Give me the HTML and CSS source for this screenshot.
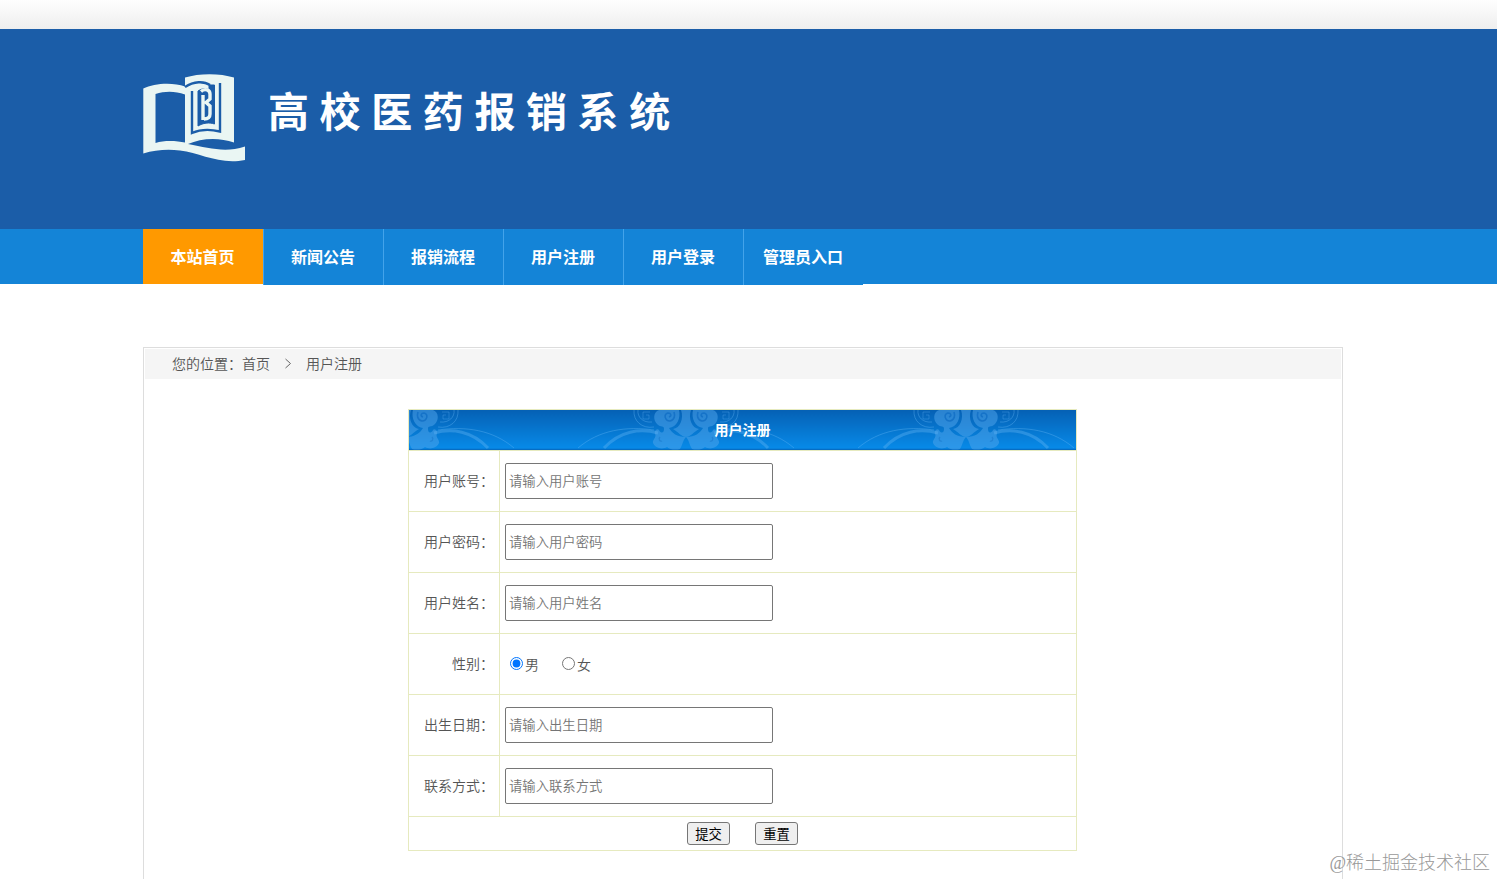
FILE: index.html
```
<!DOCTYPE html>
<html lang="zh-CN">
<head>
    <meta charset="UTF-8">
    <title>高校医药报销系统</title>
    <link rel="stylesheet" href="styles.css">
</head>
<body>

    <div class="topbar"></div>

    <div class="header">
        <div class="wrap header-inner">
            <svg class="logo" width="104" height="90" viewBox="0 0 104 90">
                <!-- book -->
                <path fill="#eaf6f3" fill-rule="evenodd" d="M.3 15.5 C11 10 30 9 42 13.5 V4.5 C56 0 77 0 91 4.5 V69.5 C76 64 58 65 45 71 C66 75 82 80 102 73.5 V87 C76 92 58 80 37 77.5 C24 76 12 77 .3 80.5 Z M12.5 21 C22 18 32 18 42 21.5 V69.5 C34 68 22 67 12.5 70 Z"/>
                <!-- emblem on the right page -->
                <g fill="none" stroke="#1b5da8">
                    <path stroke-width="2.4" d="M42 14 C51 8 61 8 67 12 M49 18 V60 C58 56 67 56 77 58.5 V10"/>
                    <path fill="#1b5da8" stroke-width="1" d="M55 18 C60 15 63 15 66 17 V12 H71.5 V51 C66 49 60 50 55 53 Z"/>
                </g>
                <path fill="none" stroke="#eaf6f3" stroke-width="3.4" d="M60 22 V47 M58 18.5 C62 15 67 17 67 21 V26 L63 29.5 L67 33 V41 Q67 46 61 46"/>
            </svg>
            <div class="site-name">高校医药报销系统</div>
        </div>
    </div>

    <div class="nav">
        <ul class="wrap nav-list">
            <li class="active"><a>本站首页</a></li>
            <li><a>新闻公告</a></li>
            <li><a>报销流程</a></li>
            <li><a>用户注册</a></li>
            <li><a>用户登录</a></li>
            <li><a>管理员入口</a></li>
        </ul>
    </div>

    <div class="wrap content">
        <div class="position">
            <span>您的位置：首页</span>
            <svg width="8" height="12" viewBox="0 0 8 12"><path d="M1.5 2 L6.5 6.5 L1.5 11" fill="none" stroke="#666"/></svg>
            <span>用户注册</span>
        </div>

        <form>
            <table class="reg">
                <tr>
                    <th colspan="2">
                        <svg class="flower" width="667" height="40" viewBox="0 0 667 40">
                            <defs>
                                <g id="half">
                                    <path fill="#52a5ec" fill-opacity=".5" d="M0 0 H5 C2 9 6 18 13 19 C8 22 4 27 0 27 Z"/>
                                    <path fill="#52a5ec" fill-opacity=".5" d="M7 0 H27 C33 2 33 10 29 14 C25 18 22 15 22 19 C22 24 26 23 27 20 C28 18 32 20 31 24 C29 27 34 30 33 33 C31 38 24 40 19 37 C16 40 10 40 6 39 C3 34 3 30 0 27 C9 27 14 23 17 18 C9 17 5 8 7 0 Z"/>
                                    <path fill="none" stroke="#1673c8" stroke-width="1.6" d="M17 7 C14 6 15 3 18 3 C23 4 21 11 16 11 C11 10 11 5 12 2"/>
                                    <path fill="none" stroke="#1673c8" stroke-width="1.2" stroke-opacity=".5" d="M26 27 C28 29 26 32 24 31"/>
                                    <g fill="none" stroke="#65b6f4" stroke-opacity=".38">
                                        <path stroke-width="3" d="M28 23 C46 18 66 21 82 38"/>
                                        <path d="M32 20 C60 16 87 20 108 38 M32 17 C44 19 53 11 52 0 M34 12 C43 13 49 7 48 0"/>
                                        <path stroke-opacity=".3" d="M36 2 H43 V9 H37 V5 H40"/>
                                    </g>
                                </g>
                                <g id="orn">
                                    <use href="#half"/>
                                    <use href="#half" transform="scale(-1 1)"/>
                                </g>
                            </defs>
                            <use href="#orn" x="-3"/>
                            <use href="#orn" x="277"/>
                            <use href="#orn" x="557"/>
                        </svg>
                        <span class="th-text">用户注册</span>
                    </th>
                </tr>
                <tr>
                    <td class="label">用户账号：</td>
                    <td><input class="txt" type="text" placeholder="请输入用户账号"></td>
                </tr>
                <tr>
                    <td class="label">用户密码：</td>
                    <td><input class="txt" type="password" placeholder="请输入用户密码"></td>
                </tr>
                <tr>
                    <td class="label">用户姓名：</td>
                    <td><input class="txt" type="text" placeholder="请输入用户姓名"></td>
                </tr>
                <tr>
                    <td class="label">性别：</td>
                    <td>
                        <div class="sex">
                            <label><input type="radio" name="sex" checked>男</label>
                            <label><input type="radio" name="sex">女</label>
                        </div>
                    </td>
                </tr>
                <tr>
                    <td class="label">出生日期：</td>
                    <td><input class="txt" type="text" placeholder="请输入出生日期"></td>
                </tr>
                <tr>
                    <td class="label">联系方式：</td>
                    <td><input class="txt" type="text" placeholder="请输入联系方式"></td>
                </tr>
                <tr class="btn-row">
                    <td colspan="2">
                        <div class="btns">
                            <button type="button">提交</button>
                            <button type="reset">重置</button>
                        </div>
                    </td>
                </tr>
            </table>
        </form>
    </div>

    <div class="watermark">@稀土掘金技术社区</div>

</body>
</html>
```
FILE: styles.css
```
* { box-sizing: border-box; }
body {
    margin: 0;
    padding-right: 11px;
    height: 879px;
    overflow: hidden;
    position: relative;
    font-family: "Liberation Sans", "Noto Sans CJK SC", sans-serif;
    font-size: 14px;
    font-weight: 350;
    color: #555;
    background: white;
}
.wrap { width: 1200px; margin: 0 auto; }

/* full width bars run under the body padding */
.topbar, .header, .nav { margin-right: -11px; padding-right: 11px; }
.topbar { height: 29px; background: linear-gradient(#fefefe, #eee); }

/* Header */
.header { height: 200px; background: #1b5da8; }
.header-inner { display: flex; padding-top: 44px; }
.logo { display: block; flex: none; }
.site-name {
    margin: 7px 0 0 21px;
    font-family: "Noto Sans CJK SC", sans-serif;
    font-size: 41px;
    line-height: 58px;
    font-weight: bold;
    letter-spacing: 10.6px;
    color: white;
}

/* Nav */
.nav { height: 55px; background: #1484d7; }
.nav-list { display: flex; padding: 0; list-style: none; }
.nav-list li {
    width: 120px;
    height: 56px;
    padding-right: 1px;
    line-height: 58px;
    text-align: center;
    font-size: 16px;
    font-weight: bold;
    color: white;
    background: #1484d7;
    border-left: 1px solid #43a3ea;
}
.nav-list li.active { height: 55px; background: #ff9900; border-left: none; }

/* Content */
.content {
    height: 560px;
    margin-top: 63px;
    padding: 1px;
    border: 1px solid #ddd;
}
.position {
    display: flex;
    align-items: center;
    gap: 14px;
    height: 30px;
    padding: 0 0 2px 27px;
    background: #f5f5f5;
}

/* Register form */
.reg {
    width: 669px;
    margin: 30px 0 0 263px;
    border-collapse: collapse;
}
.reg th, .reg td { border: 1px solid #e6eabf; padding: 0 5px; height: 61px; }
.reg th {
    position: relative;
    height: 41px;
    padding: 0 0 2px;
    color: white;
    background: linear-gradient(#0561b5, #078ae8 95%, #0561b5 98%);
}
.flower { position: absolute; left: 0; top: 0; }
.th-text { position: relative; }
.reg td.label { width: 91px; padding: 0 5px 2px 0; text-align: right; white-space: nowrap; }
.txt {
    display: block;
    width: 268px;
    height: 36px;
    padding: 1px 3px;
    border: 1px solid #767676;
    border-radius: 2px;
    font-family: inherit;
    font-size: 13.33px;
    font-weight: inherit;
}
.sex { display: flex; gap: 23px; padding: 0 0 1px 5px; }
.sex label { display: flex; align-items: center; }
.sex input { margin: 0 2px 0 0; }
.reg .btn-row td { height: 34px; }
.btns { display: flex; justify-content: center; gap: 25px; }
.btns button {
    width: 43px;
    height: 23px;
    padding: 0;
    font-family: inherit;
    font-size: 13.33px;
    color: black;
    background: #efefef;
    border: 1px solid #767676;
    border-radius: 3px;
}

.watermark {
    position: absolute;
    right: 7px;
    bottom: 5px;
    font-family: "Liberation Serif", "Noto Sans CJK SC", serif;
    font-size: 18px;
    font-weight: 300;
    color: #999;
}
```
